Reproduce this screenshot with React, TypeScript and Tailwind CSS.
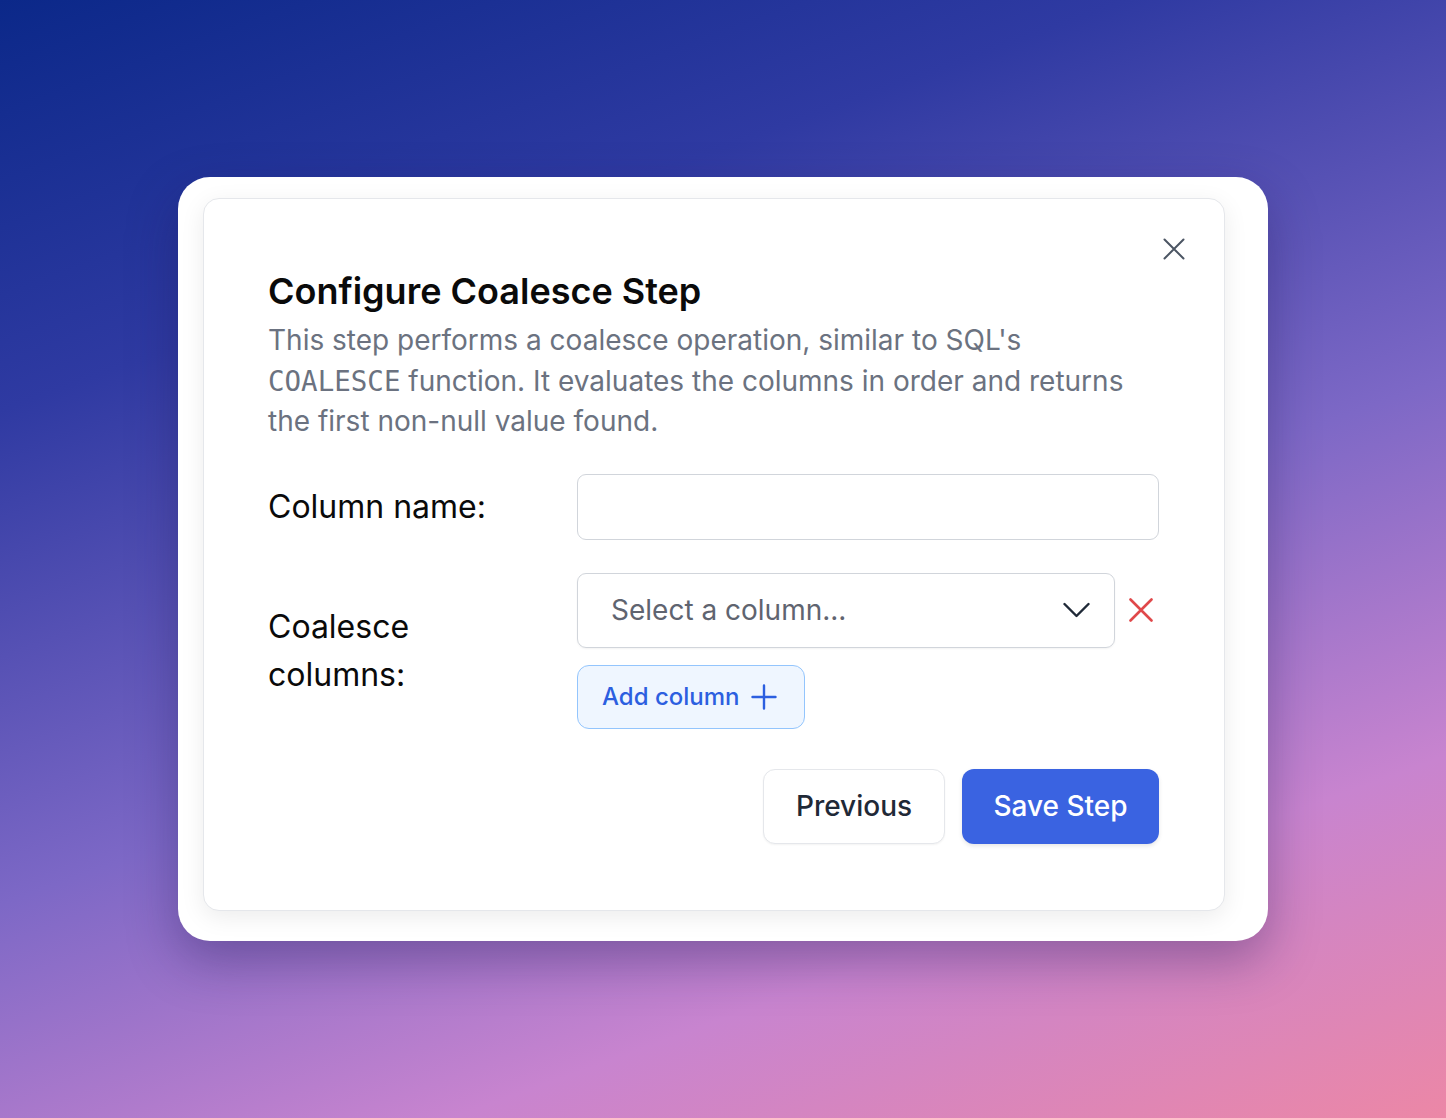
import React from "react";

function CloseIcon() {
  return (
    <svg width="22" height="22" viewBox="0 0 22 22" fill="none" stroke="#4b5563" strokeWidth="2" strokeLinecap="round">
      <path d="M1.5 1.5 L20.5 20.5 M20.5 1.5 L1.5 20.5" />
    </svg>
  );
}

function RedX() {
  return (
    <svg width="24" height="24" viewBox="0 0 24 24" fill="none" stroke="#e0484a" strokeWidth="2.6" strokeLinecap="round">
      <path d="M1.5 1.5 L22.5 22.5 M22.5 1.5 L1.5 22.5" />
    </svg>
  );
}

function Chevron() {
  return (
    <svg width="27" height="16" viewBox="0 0 27 16" fill="none" stroke="#1f2937" strokeWidth="2.4" strokeLinecap="round" strokeLinejoin="round">
      <path d="M1.5 2 L13.5 14 L25.5 2" />
    </svg>
  );
}

function PlusIcon() {
  return (
    <svg width="26" height="26" viewBox="0 0 26 26" fill="none" stroke="#2c5fe0" strokeWidth="2.4" strokeLinecap="round">
      <path d="M13 1.5 L13 24.5 M1.5 13 L24.5 13" />
    </svg>
  );
}

export default function App() {
  return (
    <div className="min-h-screen w-full flex items-center justify-center bg-[linear-gradient(160deg,#0b2889_0%,#2f3aa2_25%,#7d68c6_55%,#c884cf_78%,#ec87a6_100%)] font-['Inter','Noto_Sans',sans-serif]">
      <div className="w-[1090px] rounded-[32px] bg-white pt-[21px] pl-[25px] pr-[43px] pb-[30px] shadow-[0_20px_50px_rgba(30,20,80,0.35)]">
        <div className="relative rounded-[16px] border border-gray-200 bg-white shadow-[0_6px_24px_rgba(0,0,0,0.08)] pl-[64px] pr-[65px] pt-[68px] pb-[66px]">
          <button className="absolute right-[39px] top-[39px]">
            <CloseIcon />
          </button>
          <h2 className="text-[36px] leading-[48px] font-semibold text-[#0a0a0a]">
            Configure Coalesce Step
          </h2>
          <p className="mt-[5px] text-[28px] leading-[40.5px] text-[#6b7280]">
            This step performs a coalesce operation, similar to SQL's{" "}
            <code className="inline-block leading-none font-['DejaVu_Sans_Mono',monospace] text-[27.5px]">COALESCE</code> function. It
            evaluates the columns in order and returns the first non-null value found.
          </p>

          <div className="mt-[32px] flex items-center">
            <div className="w-[309px] shrink-0 text-[32px] leading-[48px] text-[#0a0a0a]">Column name:</div>
            <input className="flex-1 h-[66px] rounded-[9px] border-[1.5px] border-[#d1d5db] outline-none px-4 text-[27px]" />
          </div>

          <div className="mt-[33px] flex items-center">
            <div className="w-[309px] shrink-0">
              <div className="w-[220px] text-[32px] leading-[48px] text-[#0a0a0a]">Coalesce columns:</div>
            </div>
            <div className="flex-1 flex flex-col gap-[17px]">
              <div className="flex items-center">
                <div className="w-[538px] h-[75px] rounded-[9px] border-[1.5px] border-[#d1d5db] flex items-center justify-between pl-[33px] pr-[24px] shadow-[0_1px_2px_rgba(0,0,0,0.05)]">
                  <span className="text-[28px] text-[#5f6470]">Select a column...</span>
                  <Chevron />
                </div>
                <div className="flex-1 flex justify-end pr-[6px]">
                  <RedX />
                </div>
              </div>
              <div>
                <button className="w-[228px] h-[64px] rounded-[12px] border-[1.5px] border-[#93c5fd] bg-[#eff6ff] flex items-center gap-[12px] pl-[24px]">
                  <span className="text-[24px] font-medium text-[#2c5fe0]">Add column</span>
                  <PlusIcon />
                </button>
              </div>
            </div>
          </div>

          <div className="mt-[40px] flex justify-end gap-[17px]">
            <button className="w-[182px] h-[75px] rounded-[12px] border-[1.5px] border-[#e5e7eb] bg-white text-[28px] font-medium text-[#1f2937] shadow-[0_1px_2px_rgba(0,0,0,0.05)]">
              Previous
            </button>
            <button className="w-[197px] h-[75px] rounded-[12px] bg-[#3a63e1] text-[28px] font-medium text-white shadow-[0_2px_4px_rgba(0,0,0,0.1)]">
              Save Step
            </button>
          </div>
        </div>
      </div>
    </div>
  );
}
